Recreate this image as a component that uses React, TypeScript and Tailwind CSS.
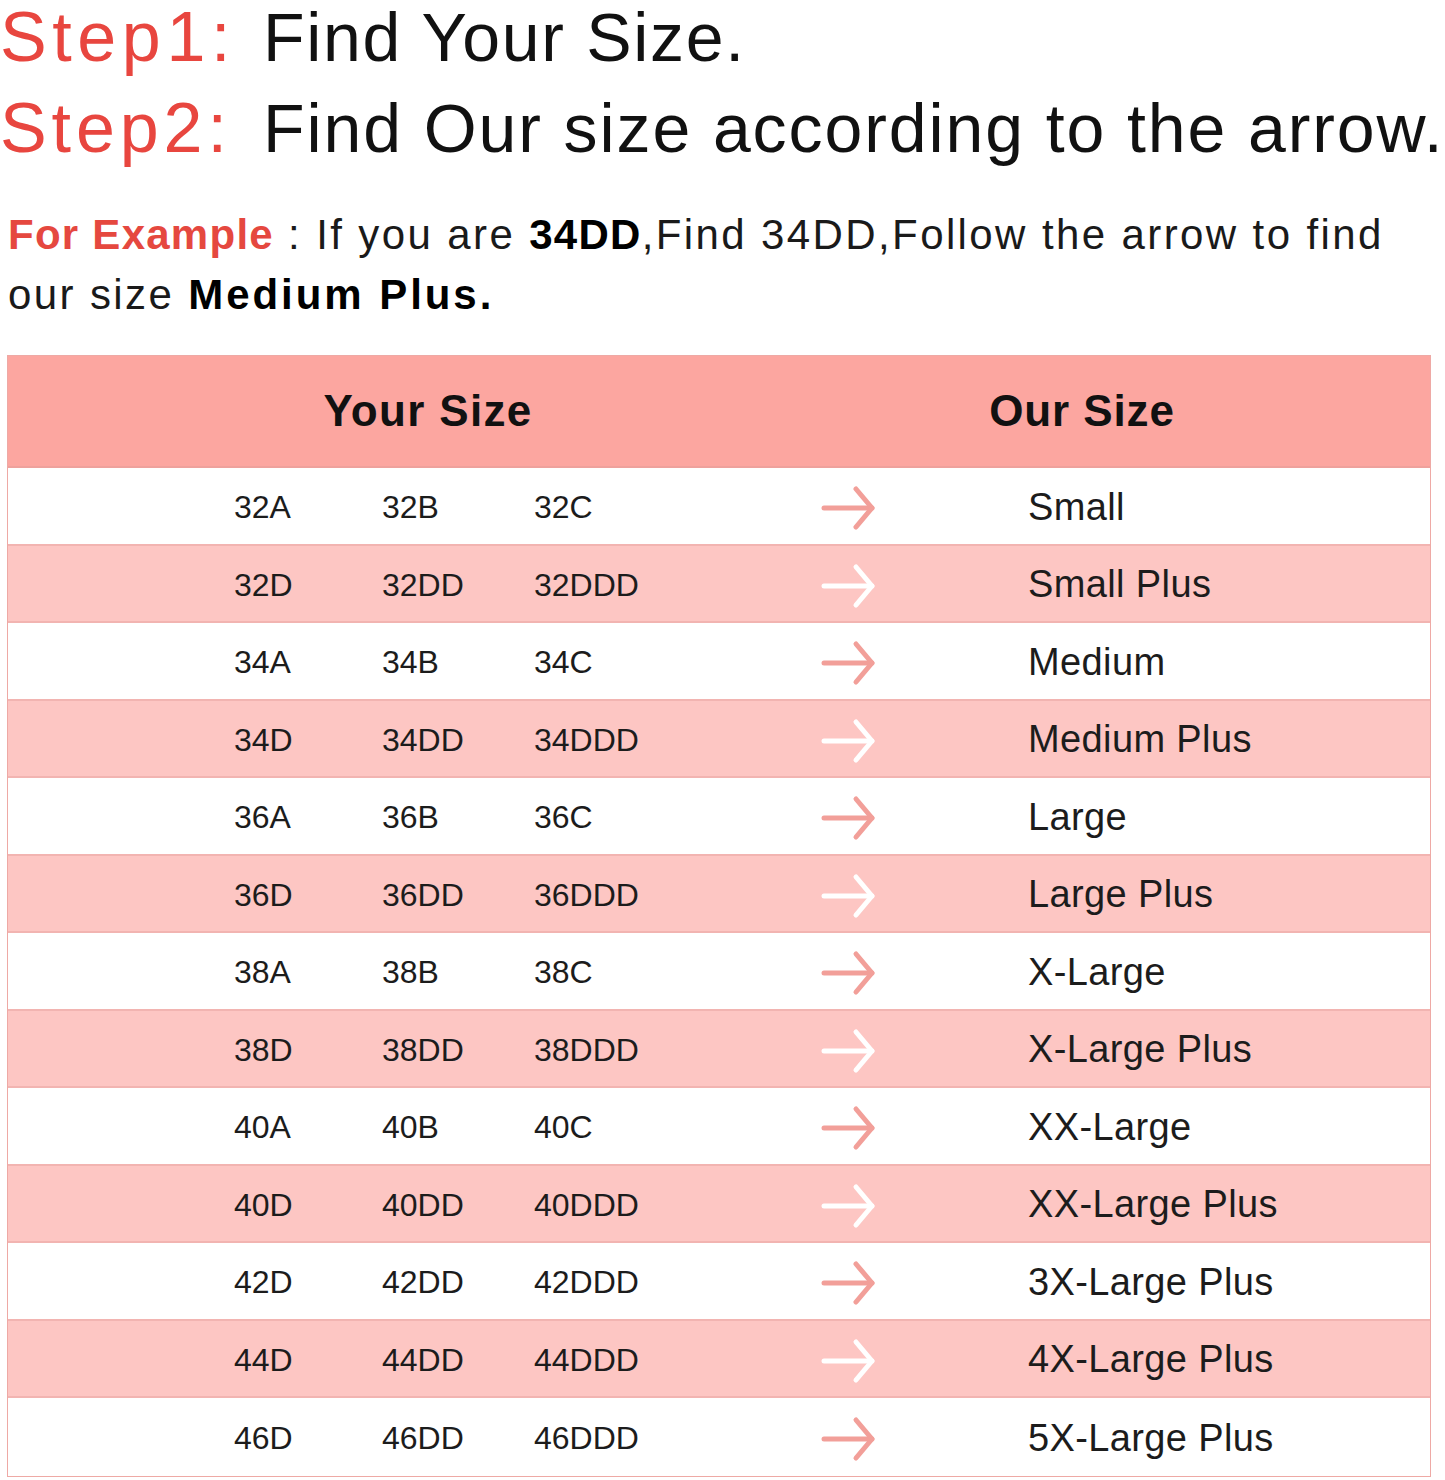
const rows = [
  ["32A", "32B", "32C", "Small"],
  ["32D", "32DD", "32DDD", "Small Plus"],
  ["34A", "34B", "34C", "Medium"],
  ["34D", "34DD", "34DDD", "Medium Plus"],
  ["36A", "36B", "36C", "Large"],
  ["36D", "36DD", "36DDD", "Large Plus"],
  ["38A", "38B", "38C", "X-Large"],
  ["38D", "38DD", "38DDD", "X-Large Plus"],
  ["40A", "40B", "40C", "XX-Large"],
  ["40D", "40DD", "40DDD", "XX-Large Plus"],
  ["42D", "42DD", "42DDD", "3X-Large Plus"],
  ["44D", "44DD", "44DDD", "4X-Large Plus"],
  ["46D", "46DD", "46DDD", "5X-Large Plus"],
];

function Arrow({ light }: { light: boolean }) {
  return (
    <svg width="56" height="48" viewBox="0 0 56 48" className="block">
      <g
        fill="none"
        stroke={light ? "#ffffff" : "#f29f99"}
        strokeWidth="5"
        strokeLinecap="round"
        strokeLinejoin="round"
      >
        <path d="M3 24 H51" />
        <path d="M35 5 L51 24 L35 43" />
      </g>
    </svg>
  );
}

export default function App() {
  return (
    <div className="w-[1445px] h-[1480px] bg-white pt-[4px] font-['Liberation_Sans',Arial,sans-serif] text-[#111]">
      {/* Steps */}
      <div className="flex items-center h-[66px] whitespace-nowrap">
        <span className="w-[263px] shrink-0 text-[70px] leading-[66px] text-[#e8463f] tracking-[0.08em]">
          Step1:
        </span>
        <span className="text-[68px] leading-[66px] tracking-[0.025em]">Find Your Size.</span>
      </div>
      <div className="flex items-center h-[70px] mt-[23px] whitespace-nowrap">
        <span className="w-[263px] shrink-0 text-[70px] leading-[70px] text-[#e8463f] tracking-[0.07em]">
          Step2:
        </span>
        <span className="text-[68px] leading-[70px] tracking-[0.028em]">
          Find Our size according to the arrow.
        </span>
      </div>

      {/* Example */}
      <div className="mt-[42px] pl-[8px] text-[42px] leading-[60px] tracking-[0.057em] whitespace-nowrap text-[#1a1a1a]">
        <span className="text-[#e5483f] font-bold tracking-[0.03em]">For Example</span>
        <span> : If you are </span>
        <span className="font-bold text-black tracking-[0.03em]">34DD</span>
        <span>,Find 34DD,Follow the arrow to find</span>
        <br />
        <span>our size </span>
        <span className="font-bold text-black tracking-[0.07em]">Medium Plus.</span>
      </div>

      {/* Table */}
      <div className="mt-[30px] ml-[7px] w-[1424px] border border-[#eea9a5]">
        <div className="flex items-center h-[112px] bg-[#fca6a0] border-b-2 border-[#eea19c]">
          <div className="w-[840px] text-center text-[44px] font-bold tracking-[0.03em] text-[#111]">
            Your Size
          </div>
          <div className="w-[468px] text-center text-[44px] font-bold tracking-[0.02em] text-[#111]">
            Our Size
          </div>
        </div>
        {rows.map((r, i) => {
          const pink = i % 2 === 1;
          return (
            <div
              key={i}
              className={`grid grid-cols-[226px_148px_152px_287px_207px_1fr] items-center h-[77.5px] pt-[3px] text-[#1c1c1c] ${
                i < rows.length - 1 ? "border-b-2 border-[#f2b4b1]" : ""
              } ${pink ? "bg-[#fdc6c3]" : "bg-white"}`}
            >
              <div />
              <div className="text-[32px]">{r[0]}</div>
              <div className="text-[32px]">{r[1]}</div>
              <div className="text-[32px]">{r[2]}</div>
              <div className="pt-[2px]">
                <Arrow light={pink} />
              </div>
              <div className="text-[38px] tracking-[0.01em]">{r[3]}</div>
            </div>
          );
        })}
      </div>
    </div>
  );
}
